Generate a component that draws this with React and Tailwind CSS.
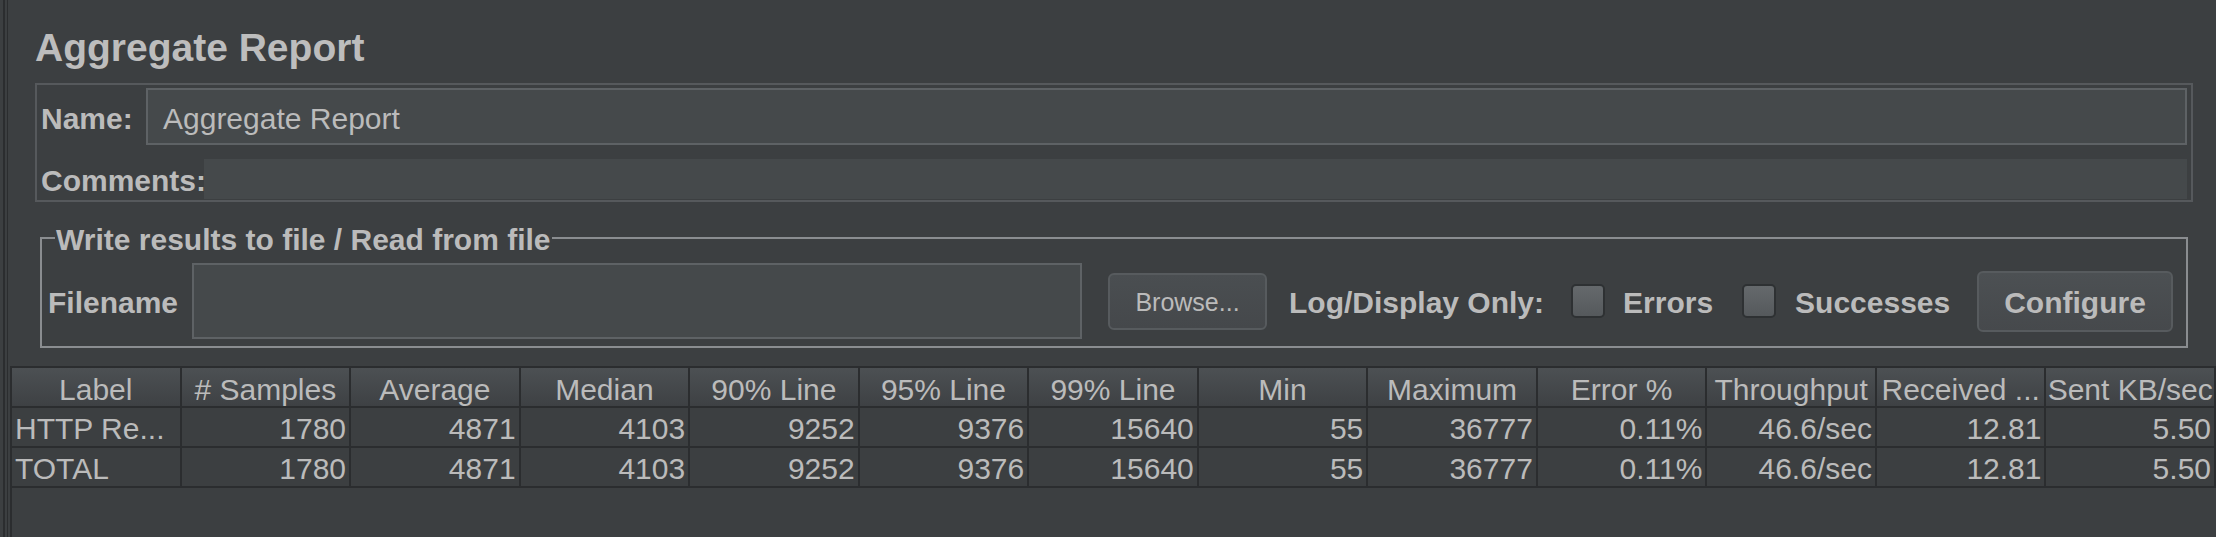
import React from "react";

const columns = [
  "Label",
  "# Samples",
  "Average",
  "Median",
  "90% Line",
  "95% Line",
  "99% Line",
  "Min",
  "Maximum",
  "Error %",
  "Throughput",
  "Received ...",
  "Sent KB/sec",
];

const rows = [
  ["HTTP Re...", "1780", "4871", "4103", "9252", "9376", "15640", "55", "36777", "0.11%", "46.6/sec", "12.81", "5.50"],
  ["TOTAL", "1780", "4871", "4103", "9252", "9376", "15640", "55", "36777", "0.11%", "46.6/sec", "12.81", "5.50"],
];

const Checkbox = () => (
  <div className="w-[34px] h-[34px] shrink-0 rounded-[5px] border-2 border-[#2e3133] bg-linear-to-b from-[#65696c] to-[#55595c]" />
);

const App = () => {
  return (
    <div className="w-[2216px] h-[537px] bg-[#3c3f41] flex overflow-hidden font-['Liberation_Sans',Arial,sans-serif] text-[#bbbbbb]">
      {/* splitter on the left */}
      <div className="w-[8px] shrink-0 flex">
        <div className="w-[3px]" />
        <div className="w-[2px] bg-[#2b2d2f]" />
        <div className="w-[2px]" />
        <div className="w-[1px] bg-[#2b2d2f]" />
      </div>

      <div className="flex-1 min-w-0 flex flex-col">
        <h1 className="ml-[27px] pt-[28px] h-[83px] text-[39px] leading-[39px] font-bold text-[#bdbdbd]">
          Aggregate Report
        </h1>

        {/* name / comments panel */}
        <div className="ml-[27px] mr-[23px] border-2 border-[#56595c] pt-[3px] px-[4px] pb-[1px] flex flex-col">
          <div className="flex items-center h-[57px]">
            <span className="w-[105px] shrink-0 pt-[4px] text-[30px] leading-none font-bold">Name:</span>
            <div className="flex-1 h-full border-2 border-[#5e6265] bg-[#45494b] flex items-center pl-[15px] pt-[4px] text-[30px] leading-none">
              Aggregate Report
            </div>
          </div>
          <div className="flex items-center h-[40px] mt-[14px]">
            <span className="w-[163px] shrink-0 pt-[4px] whitespace-nowrap text-[30px] leading-none font-bold">Comments:</span>
            <div className="flex-1 h-full bg-[#45494b]" />
          </div>
        </div>

        {/* write results to file */}
        <fieldset className="ml-[32px] mr-[28px] mt-[18px] min-w-0 border-2 border-[#8a8d90] pl-[6px] pr-[13px] pt-[8px] pb-[7px]">
          <legend className="ml-[7px] px-[1px] pt-[5px] text-[30px] leading-[30px] font-bold">
            Write results to file / Read from file
          </legend>
          <div className="flex items-center h-[76px] text-[30px] leading-none">
            <span className="w-[144px] shrink-0 pt-[4px] font-bold">Filename</span>
            <div className="w-[890px] h-full shrink-0 border-2 border-[#5e6265] bg-[#45494b]" />
            <button className="ml-[26px] w-[159px] h-[57px] shrink-0 pt-[3px] rounded-[6px] border-2 border-[#575b5e] bg-linear-to-b from-[#4a4e51] to-[#45484b] text-[25px] text-[#bbbbbb]">
              Browse...
            </button>
            <span className="ml-[22px] pt-[4px] font-bold whitespace-nowrap">Log/Display Only:</span>
            <div className="ml-[27px]">
              <Checkbox />
            </div>
            <span className="ml-[18px] pt-[4px] font-bold">Errors</span>
            <div className="ml-[29px]">
              <Checkbox />
            </div>
            <span className="ml-[19px] pt-[4px] font-bold">Successes</span>
            <button className="ml-auto w-[196px] h-[61px] shrink-0 pt-[4px] rounded-[6px] border-2 border-[#575b5e] bg-linear-to-b from-[#4c5053] to-[#46494c] text-[30px] font-bold text-[#bbbbbb]">
              Configure
            </button>
          </div>
        </fieldset>

        {/* results table */}
        <div className="mt-[18px] ml-[2px] flex-1 min-h-0 border-l-2 border-t-2 border-[#2b2d2f]">
          <div className="grid grid-cols-[repeat(13,minmax(0,1fr))] text-[30px] leading-none">
            {columns.map((c) => (
              <div
                key={c}
                className="h-[40px] pt-[5px] flex items-center justify-center whitespace-nowrap overflow-hidden border-r-2 border-b-2 border-[#2b2d2f] bg-linear-to-b from-[#4c5053] to-[#3e4144]"
              >
                {c}
              </div>
            ))}
            {rows.map((r, ri) =>
              r.map((v, ci) => (
                <div
                  key={ri + "-" + ci}
                  className={
                    ci === 0
                      ? "h-[40px] pt-[3px] flex items-center justify-start pl-[3px] whitespace-nowrap overflow-hidden border-r-2 border-b-2 border-[#2b2d2f]"
                      : "h-[40px] pt-[3px] flex items-center justify-end pr-[3px] whitespace-nowrap overflow-hidden border-r-2 border-b-2 border-[#2b2d2f]"
                  }
                >
                  {v}
                </div>
              ))
            )}
          </div>
        </div>
      </div>
    </div>
  );
};

export default App;
